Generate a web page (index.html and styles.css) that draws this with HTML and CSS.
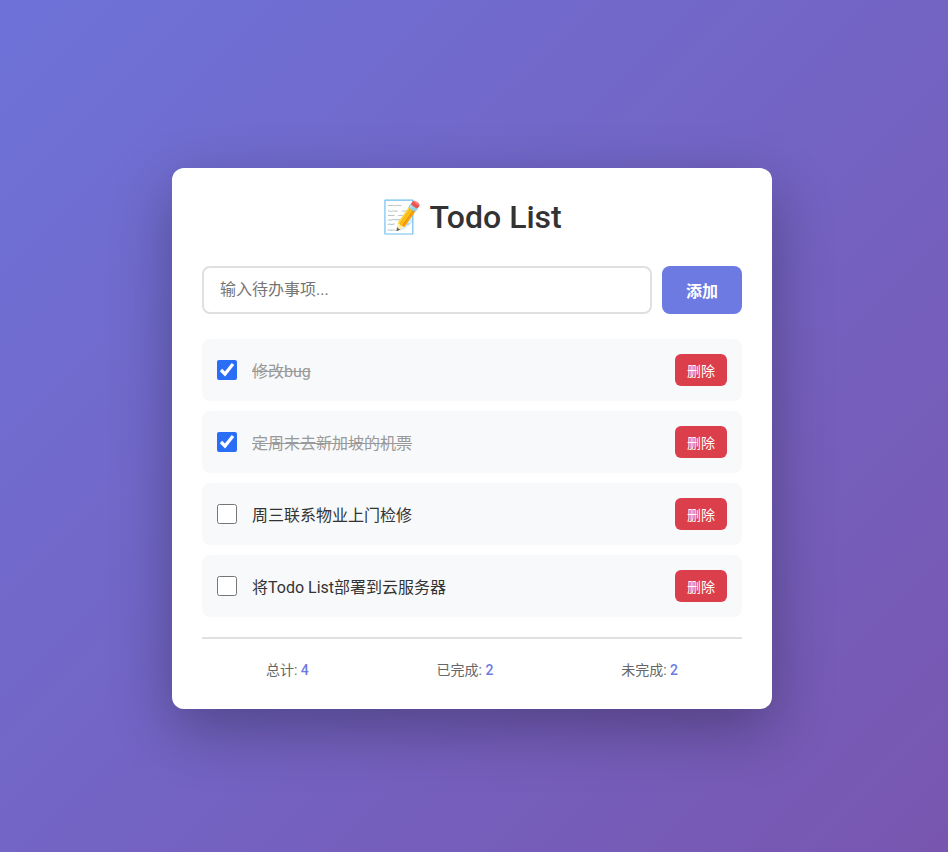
FILE: index.html
```html
<!DOCTYPE html>
<html lang="zh-CN">
<head>
    <meta charset="UTF-8">
    <meta name="viewport" content="width=device-width, initial-scale=1.0">
    <title>Todo List</title>
    <link rel="stylesheet" href="styles.css">
</head>
<body>

    <div class="container">
        <h1>📝 Todo List</h1>

        <div class="input-row">
            <input type="text" class="todo-input" placeholder="输入待办事项...">
            <button class="add-btn">添加</button>
        </div>

        <ul class="todo-list">
            <li class="todo-item done">
                <input type="checkbox" class="todo-check" checked>
                <span class="todo-text">修改bug</span>
                <button class="delete-btn">删除</button>
            </li>
            <li class="todo-item done">
                <input type="checkbox" class="todo-check" checked>
                <span class="todo-text">定周末去新加坡的机票</span>
                <button class="delete-btn">删除</button>
            </li>
            <li class="todo-item">
                <input type="checkbox" class="todo-check">
                <span class="todo-text">周三联系物业上门检修</span>
                <button class="delete-btn">删除</button>
            </li>
            <li class="todo-item">
                <input type="checkbox" class="todo-check">
                <span class="todo-text">将Todo List部署到云服务器</span>
                <button class="delete-btn">删除</button>
            </li>
        </ul>

        <div class="stats">
            <span>总计: <strong>4</strong></span>
            <span>已完成: <strong>2</strong></span>
            <span>未完成: <strong>2</strong></span>
        </div>
    </div>

</body>
</html>
```

FILE: styles.css
```css
* {
    box-sizing: border-box;
    margin: 0;
    padding: 0;
}
body {
    font-family: Roboto, "Noto Sans CJK SC", sans-serif;
    min-height: 100vh;
    padding: 25px 4px 0 0;
    display: flex;
    justify-content: center;
    align-items: center;
    background: linear-gradient(135deg, #6e72d8 0%, #7856b0 100%);
}
.container {
    width: 600px;
    padding: 30px;
    background: white;
    border-radius: 12px;
    box-shadow: 0 20px 60px rgba(0, 0, 0, 0.3);
}
h1 {
    font-size: 32px;
    font-weight: 500;
    line-height: 38px;
    text-align: center;
    color: #333;
    margin-bottom: 30px;
}
.input-row {
    display: flex;
    gap: 10px;
    margin-bottom: 25px;
}
.todo-input {
    flex: 1;
    height: 48px;
    padding: 0 16px 2px;
    font-family: inherit;
    font-size: 16px;
    border: 2px solid #e0e0e0;
    border-radius: 8px;
}
.add-btn {
    width: 80px;
    height: 48px;
    font-family: inherit;
    font-size: 16px;
    font-weight: 600;
    color: white;
    background: #6c7ae2;
    border: none;
    border-radius: 8px;
}
.todo-list {
    list-style: none;
    display: flex;
    flex-direction: column;
    gap: 10px;
}
.todo-item {
    display: flex;
    align-items: center;
    height: 62px;
    padding: 15px;
    background: #f8f9fa;
    border-radius: 8px;
}
.todo-check {
    width: 20px;
    height: 20px;
    margin-right: 15px;
    accent-color: #2a6ef5;
}
.todo-text {
    flex: 1;
    font-size: 16px;
    color: #333;
}
.done .todo-text {
    color: #999;
    text-decoration: line-through;
}
.delete-btn {
    width: 52px;
    height: 32px;
    font-family: inherit;
    font-size: 14px;
    color: white;
    background: #dc3f4c;
    border: none;
    border-radius: 6px;
}
.stats {
    display: flex;
    justify-content: space-around;
    margin-top: 20px;
    padding-top: 20px;
    border-top: 2px solid #e0e0e0;
    font-size: 14px;
    color: #666;
}
.stats strong {
    font-weight: 500;
    color: #6c7ae2;
}
```
